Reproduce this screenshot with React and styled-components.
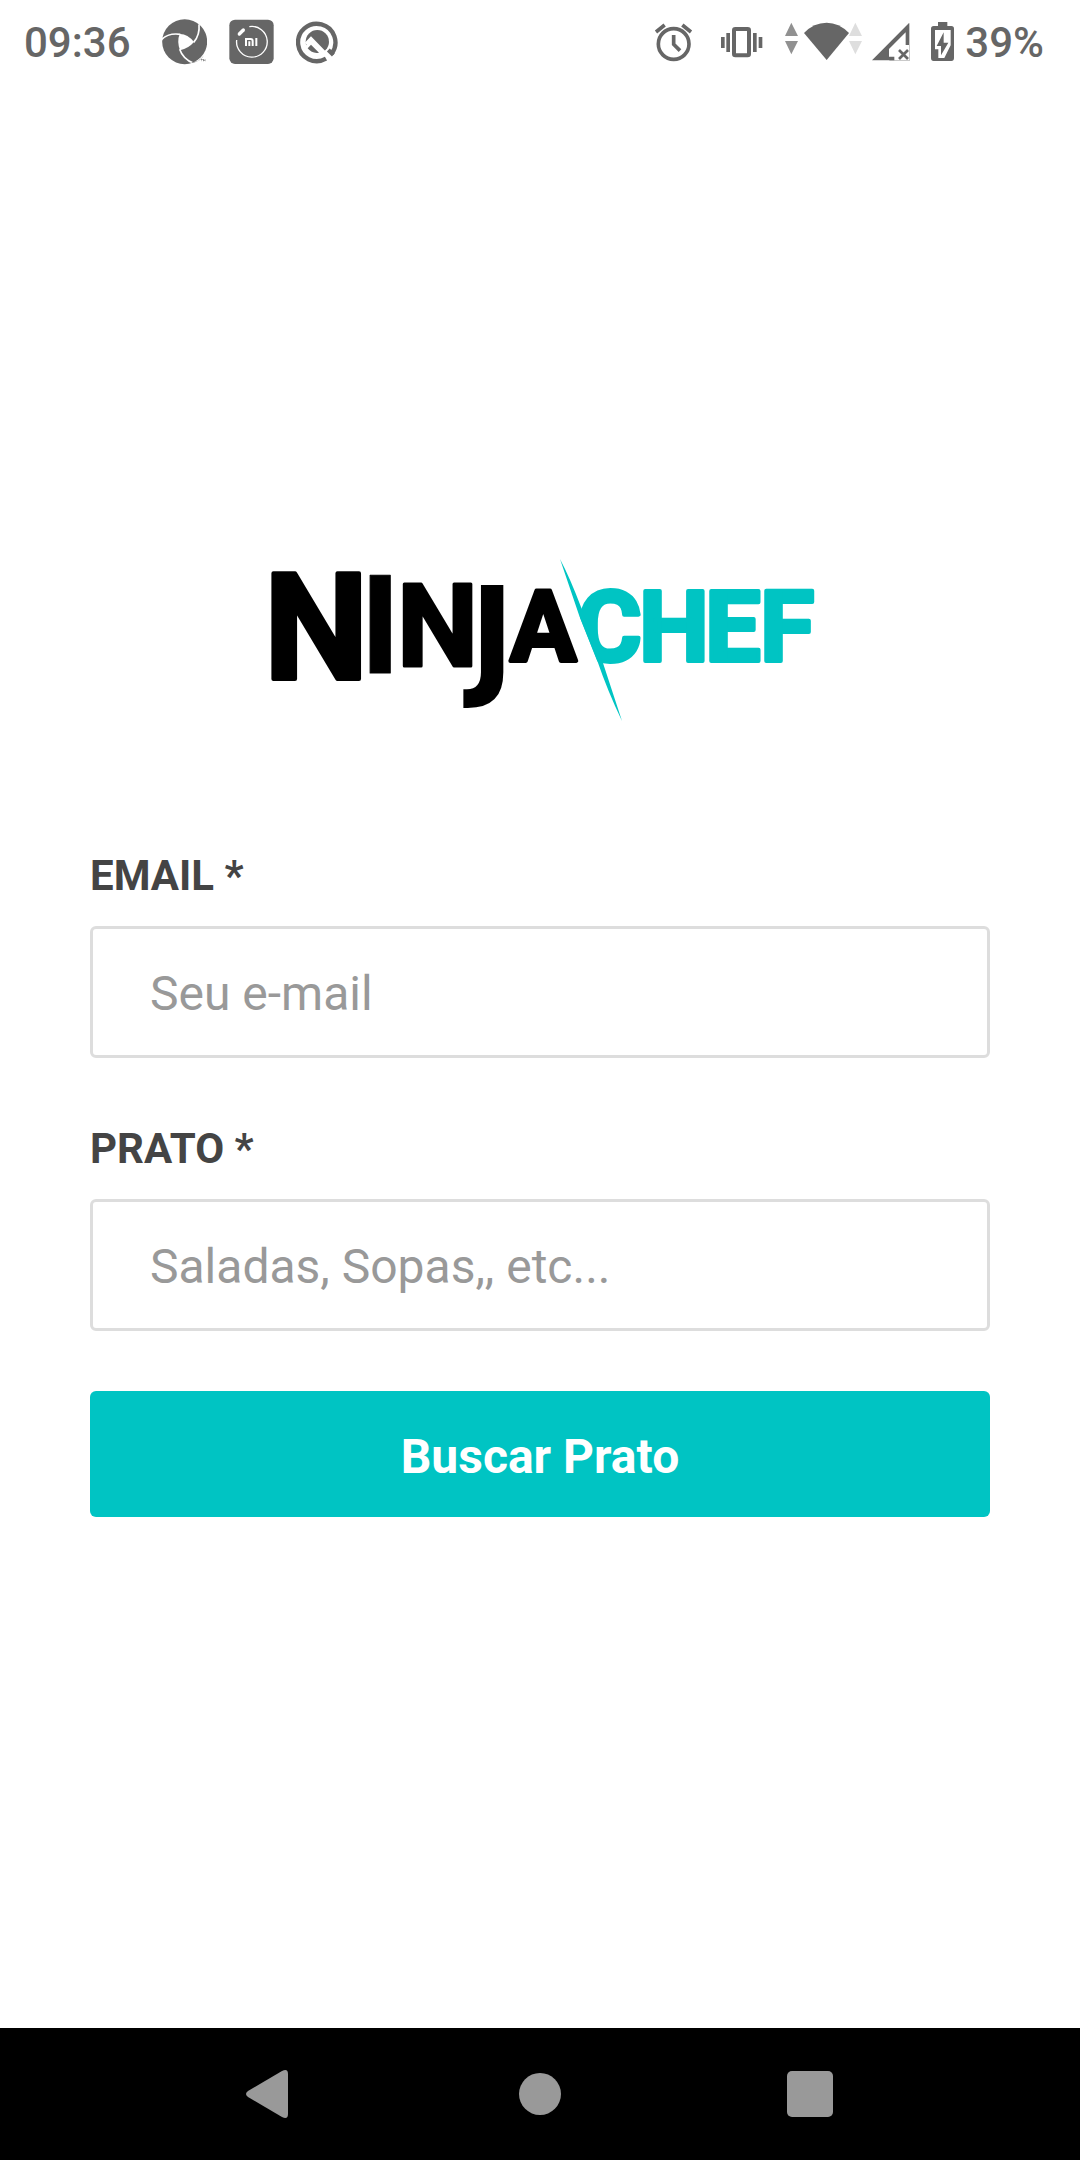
import React from "react";
import styled, { createGlobalStyle } from "styled-components";

const TEAL = "#00c4c3";
const GREY = "#666666";

const GlobalStyle = createGlobalStyle`
  *, *::before, *::after { box-sizing: border-box; }
  body {
    margin: 0;
    background: #fff;
    font-family: Roboto, "Noto Sans", sans-serif;
  }
`;

const Screen = styled.div`
  display: flex;
  flex-direction: column;
  min-height: 100vh;
`;

const StatusBar = styled.header`
  display: flex;
  justify-content: space-between;
  align-items: center;
  height: 84px;
  padding: 0 36px 0 24px;
  color: ${GREY};
`;

const StatusGroup = styled.div`
  display: flex;
  align-items: center;
  gap: ${({ $gap }) => $gap}px;
`;

const StatusText = styled.span`
  padding-top: 2px;
  font-size: 42px;
  font-weight: 500;
  line-height: 50px;
`;

const Clock = styled(StatusText)`
  margin-right: 9px;
`;

const Glyph = styled.svg`
  display: block;
  width: ${({ $width }) => $width}px;
  height: 46px;
  fill: currentColor;
`;

const Main = styled.main`
  flex: 1;
  display: flex;
  flex-direction: column;
  justify-content: center;
  padding: 0 90px 84px;
`;

const Brand = styled.h1`
  display: flex;
  justify-content: center;
  margin: 0;
  padding: 48px 0 128px;
`;

const Wordmark = styled.svg`
  display: block;
  width: 560px;
  height: 164px;
  overflow: visible;
  font-family: Roboto, sans-serif;
  font-weight: 700;
  stroke-linejoin: round;
`;

const TailLetter = styled.tspan`
  font-family: "DejaVu Sans Condensed", "DejaVu Sans", sans-serif;
`;

const Form = styled.form`
  display: flex;
  flex-direction: column;
`;

const Field = styled.div`
  display: flex;
  flex-direction: column;
  gap: 25px;
  margin-bottom: ${({ $last }) => ($last ? 60 : 66)}px;
`;

const Label = styled.label`
  color: #444;
  font-size: 42px;
  font-weight: 700;
  line-height: 50px;
`;

const Input = styled.input`
  width: 100%;
  height: 132px;
  padding: 2px 57px 0;
  border: 3px solid #ddd;
  border-radius: 6px;
  outline: none;
  background: #fff;
  color: #444;
  font-family: inherit;
  font-size: 48px;

  &::placeholder {
    color: #999;
    opacity: 1;
  }
`;

const Submit = styled.button`
  height: 126px;
  padding: 4px 0 0;
  border: 0;
  border-radius: 6px;
  background: ${TEAL};
  color: #fff;
  font-family: inherit;
  font-size: 48px;
  font-weight: 700;
`;

const NavBar = styled.nav`
  display: flex;
  height: 132px;
  padding: 0 12.5%;
  background: #000;
`;

const NavButton = styled.button`
  flex: 1;
  display: flex;
  justify-content: center;
  align-items: center;
  padding: 0;
  border: 0;
  background: none;
  color: #999;
`;

const NavGlyph = styled.svg`
  display: block;
  width: 48px;
  height: 48px;
  fill: currentColor;
`;

const Aperture = () => (
  <Glyph $width={45} viewBox="486 57 135 138" aria-hidden="true">
    <circle cx="554" cy="125" r="67.5" />
    <path fill="#fff" d="M539 102 Q562 101 582 126 Q566 145 540 151 Q530 124 539 102Z" />
    <g fill="none" stroke="#fff" strokeWidth="5">
      <path d="M484 119 Q505 98 541 103" />
      <path d="M597 73 Q600 105 581 127" />
      <path d="M539 148 Q549 178 581 190" />
    </g>
    <path fill="#fff" d="M574 195 L580 186 Q600 189 614 168 L625 195Z" />
    <path d="M573 187 Q598 187 612 166 L606 174 Q592 187 578 188Z" />
    <path d="M603 178h5v2h-2v4h-1v-4h-2zM609 178h2l2 3 2-3h1v6h-1v-4l-2 3-2-3v4h-2z" />
  </Glyph>
);

const MiHome = () => (
  <Glyph $width={45} viewBox="685 57 135 138" aria-hidden="true">
    <rect x="686" y="59" width="133" height="133" rx="17" />
    <path fill="none" stroke="#fff" strokeWidth="4" d="M746 80 A46 46 0 1 1 708 120" />
    <path stroke="#fff" strokeWidth="10" strokeLinecap="round" d="M716 102 L728 90" />
    <path fill="none" stroke="#fff" strokeWidth="6" d="M736 138V117H750Q756 117 756 123V138M746 124V138M767 114V138" />
  </Glyph>
);

const QCircle = () => (
  <Glyph $width={43} viewBox="887 57 129 138" aria-hidden="true">
    <path
      fill="none"
      stroke="currentColor"
      strokeWidth="13"
      d="M977 176 A56 56 0 1 1 994 161"
    />
    <circle cx="951" cy="125" r="35" />
    <path fill="none" stroke="#fff" strokeWidth="10" d="M917 132 L932 116 L985 171" />
    <path fill="#fff" d="M915 138 L932 121 L968 158 Q942 172 922 153Z" />
    <path d="M922 145 L932 134 L956 158 Q936 162 922 145Z" />
    <path stroke="currentColor" strokeWidth="12" d="M984 150 L999 165" />
  </Glyph>
);

const Alarm = () => (
  <Glyph $width={56} viewBox="24 57 168 138" aria-hidden="true">
    <circle cx="98" cy="132" r="46" fill="none" stroke="currentColor" strokeWidth="11" />
    <g fill="none" stroke="currentColor" strokeWidth="11">
      <path d="M45 96 L71 75M124 75 L150 96" />
      <path d="M98 105V133L117 152" />
    </g>
  </Glyph>
);

const Vibrate = () => (
  <Glyph $width={64} viewBox="216 57 192 138" aria-hidden="true">
    <rect x="279" y="87" width="45" height="79" rx="4" fill="none" stroke="currentColor" strokeWidth="12" />
    <path d="M240 111h11v33h-11zM256 99h11v57h-11zM336 99h11v57h-11zM353 111h11v33h-11z" />
  </Glyph>
);

const Wifi = () => (
  <Glyph $width={78} viewBox="432 57 234 138" aria-hidden="true">
    <path fill="#919191" d="M451 68L471 108H432ZM432 123H471L451 163Z" />
    <path fill="#dedede" d="M643 68L663 108H624ZM624 123H663L643 163Z" />
    <path d="M489 99Q518 68 557 68Q594 68 624 99L557 180Z" />
  </Glyph>
);

const Signal = () => (
  <Glyph $width={44} viewBox="90 57 132 138" aria-hidden="true">
    <path fill="#c9c9c9" d="M145 179H204V70H207V183H145Z" />
    <path fill="#fff" d="M145 147L194 97V135H204V179H160V170H145Z" />
    <path d="M93 181L204 69V135H194V97L144 147V170H160V181Z" />
    <path fill="none" stroke="currentColor" strokeWidth="8" d="M174 150L201 177M201 150L174 177" />
  </Glyph>
);

const Battery = () => (
  <Glyph $width={34} viewBox="246 57 102 138" aria-hidden="true">
    <path d="M291 66H319V78H331Q339 78 339 86V174Q339 183 331 183H278Q270 183 270 174V86Q270 78 278 78H291Z" />
    <path fill="#fff" d="M282 90H329V136L310 174H292V148H282Z" />
    <path d="M308 97V128H322L300 166V138H287Z" />
  </Glyph>
);

const Logo = () => (
  <Wordmark viewBox="260 559 560 164" role="img" aria-label="Ninja Chef">
    <text fill={TEAL} stroke={TEAL} strokeWidth="4" fontSize="99">
      <tspan x="577" y="661">C</tspan>
      <tspan x="639" y="661">H</tspan>
      <tspan x="705" y="661">E</tspan>
      <tspan x="760" y="661">F</tspan>
    </text>
    {/* the blade slices the left edge off the C */}
    <path fill="#fff" d="M560 580L567 585L600 668H560Z" />
    <path fill={TEAL} d="M560 559Q570 578 581 607L603 663L622 721Q608 692 597 660L579 615Z" />
    <text fill="#000" stroke="#000">
      <tspan x="264" y="679" fontSize="148" strokeWidth="4">N</tspan>
      <tspan x="360" y="673" fontSize="138" strokeWidth="1">I</tspan>
      <tspan x="397" y="666" fontSize="115" strokeWidth="3">N</tspan>
      <TailLetter x="470" y="682" fontSize="132" strokeWidth="0">J</TailLetter>
      <tspan x="510" y="661" fontSize="99" strokeWidth="4">A</tspan>
    </text>
  </Wordmark>
);

export default function App() {
  return (
    <Screen>
      <GlobalStyle />
      <StatusBar>
        <StatusGroup $gap={22}>
          <Clock>09:36</Clock>
          <Aperture />
          <MiHome />
          <QCircle />
        </StatusGroup>
        <StatusGroup $gap={8}>
          <Alarm />
          <Vibrate />
          <Wifi />
          <Signal />
          <Battery />
          <StatusText>39%</StatusText>
        </StatusGroup>
      </StatusBar>

      <Main>
        <Brand>
          <Logo />
        </Brand>
        <Form onSubmit={(event) => event.preventDefault()}>
          <Field>
            <Label htmlFor="email">EMAIL *</Label>
            <Input id="email" type="email" placeholder="Seu e-mail" />
          </Field>
          <Field $last>
            <Label htmlFor="dish">PRATO *</Label>
            <Input id="dish" type="text" placeholder="Saladas, Sopas,, etc..." />
          </Field>
          <Submit type="submit">Buscar Prato</Submit>
        </Form>
      </Main>

      <NavBar>
        <NavButton type="button" aria-label="Back">
          <NavGlyph viewBox="0 0 48 48">
            <path d="M2 21L36 1Q42-2 42 4V44Q42 50 36 47L2 27Q-2 24 2 21Z" />
          </NavGlyph>
        </NavButton>
        <NavButton type="button" aria-label="Home">
          <NavGlyph viewBox="0 0 48 48">
            <circle cx="24" cy="24" r="21" />
          </NavGlyph>
        </NavButton>
        <NavButton type="button" aria-label="Recent apps">
          <NavGlyph viewBox="0 0 48 48">
            <rect x="1" y="1" width="46" height="46" rx="5" />
          </NavGlyph>
        </NavButton>
      </NavBar>
    </Screen>
  );
}
